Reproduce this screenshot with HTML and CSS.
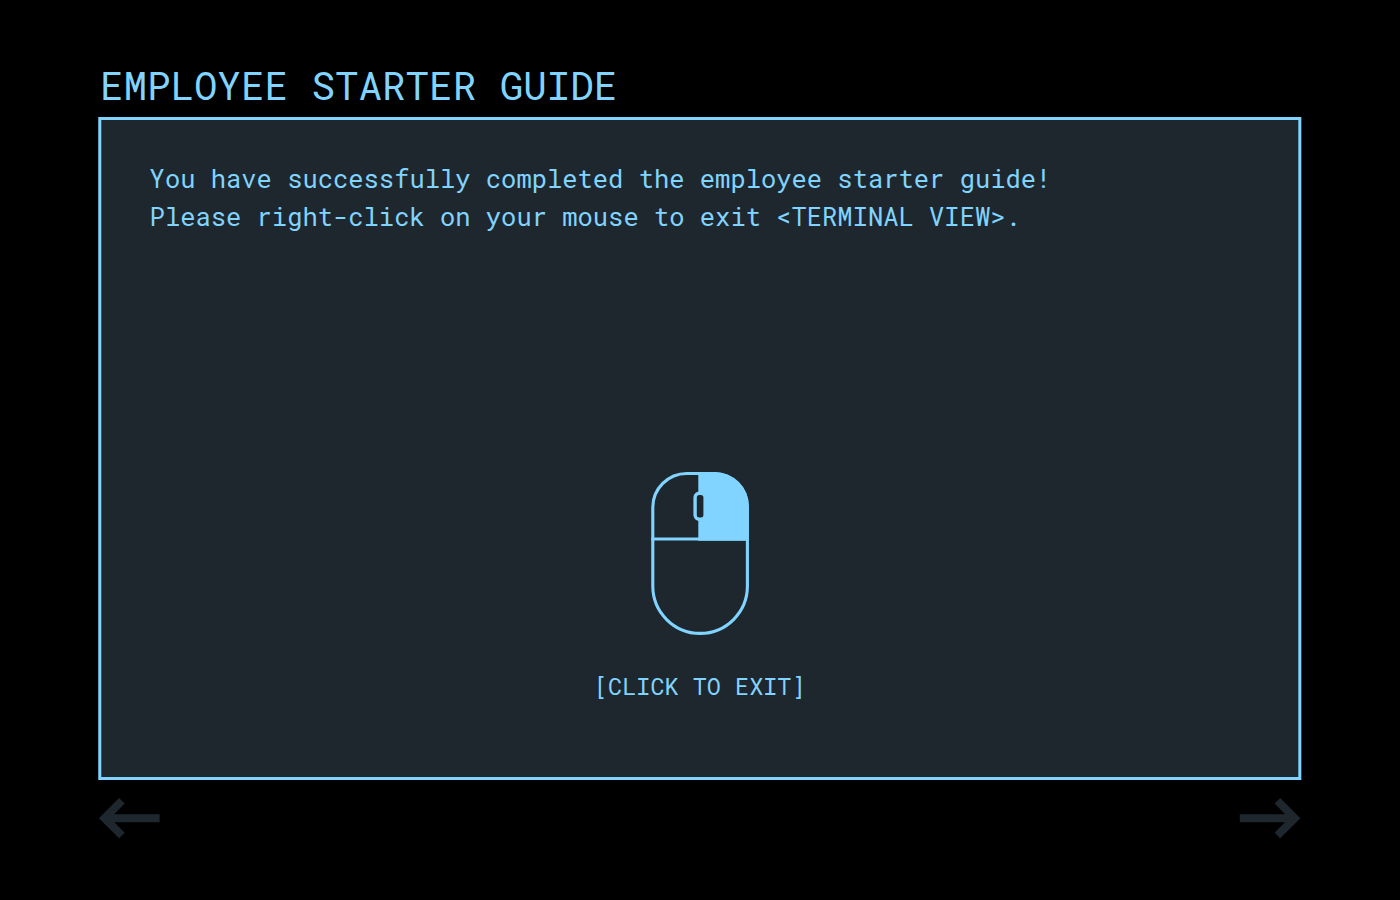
FILE: index.html
```html
<!DOCTYPE html>
<html lang="en">
<head>
<meta charset="utf-8">
<title>Employee Starter Guide</title>
<link rel="stylesheet" href="styles.css">
</head>
<body>
<main class="guide">
  <h1 class="title">EMPLOYEE STARTER GUIDE</h1>
  <section class="panel">
    <p class="message">You have successfully completed the employee starter guide!<br>Please right-click on your mouse to exit &lt;TERMINAL VIEW&gt;.</p>
    <div class="exit">
      <svg class="mouse" viewBox="0.2 0 100 166" width="100" height="166">
        <path class="fill" d="M48.2 2H65A34 34 0 0 1 98.8 36V70.7H48.2Z"/>
        <path class="line" d="M2.7 69V37.5A34 34 0 0 1 36.7 3.5H63.3A34 34 0 0 1 97.3 37.5V116.1A47.3 47.3 0 0 1 2.7 116.1V69"/>
        <path class="line" d="M1.2 69H98.8"/>
        <rect class="wheel" x="45" y="23.2" width="10" height="26" rx="4.2"/>
      </svg>
      <p class="label">[CLICK TO EXIT]</p>
    </div>
  </section>
  <nav class="nav">
    <svg class="arrow" viewBox="-0.3 0 62 42" width="62" height="42"><path d="M61 21.2H7M23.3 3.8L6 21.2L23.3 38.5"/></svg>
    <svg class="arrow" viewBox="0.6 0 62 42" width="62" height="42"><path d="M1 21.2H55M38.7 3.8L56 21.2L38.7 38.5"/></svg>
  </nav>
</main>
</body>
</html>
```
FILE: styles.css
```css
* { box-sizing: border-box; margin: 0; padding: 0; }
body { background: #000; color: #80d4ff; font-family: "Roboto Mono", "DejaVu Sans Mono", monospace; }
.guide { width: 1203px; height: 900px; margin-left: 98px; padding-top: 59px; transform: translateX(0.3px); }
.title { height: 58px; padding-left: 1.6px; font-size: 39.2px; line-height: 52px; font-weight: 400; white-space: nowrap; }
.panel { height: 663px; border: 3px solid #80d4ff; background: #1f272e; padding: 39px 48.3px; }
.message { font-size: 25.47px; line-height: 38px; white-space: nowrap; }
.exit { margin-top: 235px; display: flex; flex-direction: column; align-items: center; }
.mouse { display: block; }
.fill { fill: #80d4ff; }
.line { fill: none; stroke: #80d4ff; stroke-width: 3.1; }
.wheel { fill: #1f272e; stroke: #80d4ff; stroke-width: 3.4; }
.label { margin-top: 34px; font-size: 23.5px; line-height: 32px; }
.nav { display: flex; justify-content: space-between; margin-top: 17px; }
.arrow path { fill: none; stroke: #1f272e; stroke-width: 8; }
```
